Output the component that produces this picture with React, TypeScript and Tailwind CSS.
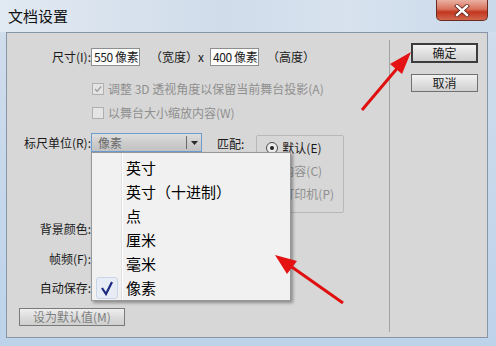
import React from 'react';

const units = ['英寸', '英寸（十进制）', '点', '厘米', '毫米', '像素'];

const Check = ({ color, size = 12 }: { color: string; size?: number }) => (
  <svg width={size} height={size} viewBox="0 0 12 12">
    <path d="M2.5 6 L5 8.8 L9.8 2.8" fill="none" stroke={color} strokeWidth="1.6" />
  </svg>
);

const App = () => {
  return (
    <div className="relative w-[496px] h-[346px] overflow-hidden bg-[linear-gradient(180deg,#dce6f1_0%,#cfdcec_12%,#bdd3ea_100%)] font-['Noto_Sans_CJK_SC','Liberation_Sans',sans-serif] text-[12px] text-[#1a1a1a]">
      {/* title bar */}
      <div className="flex justify-between h-[32px] bg-[linear-gradient(90deg,#e1e9f2_0%,#d0dcea_45%,#d7e2ee_70%,#c9d9ea_100%)]">
        <div className="pl-[8px] pt-[7px] text-[15px] leading-[18px] text-[#111]">文档设置</div>
        <div className="mr-[8px] w-[52px] h-[21px] rounded-b-[5px] border border-t-0 border-[#6a2c22] bg-[linear-gradient(180deg,#eab1a2_0%,#d9735c_45%,#c2371f_60%,#d2664c_100%)] flex items-center justify-center">
          <svg width="16" height="13" viewBox="0 0 16 13">
            <path d="M3 2 L13 11 M13 2 L3 11" stroke="#5a1f16" strokeWidth="4" strokeLinecap="square" />
            <path d="M3 2 L13 11 M13 2 L3 11" stroke="#ffffff" strokeWidth="2.4" strokeLinecap="square" />
          </svg>
        </div>
      </div>

      {/* client area */}
      <div className="ml-[6px] mr-[8px] h-[306px] border border-[#8796a6] bg-[#d7d7d7] flex">
        <div className="w-[382px] flex flex-col">
          <div className="mt-[15px] h-[18px] flex items-center">
            <div className="w-[84px] text-right">尺寸(I):</div>
            <div className="w-[49px] h-[18px] bg-white border border-[#8e8e8e] pl-[2px] leading-[16px] whitespace-nowrap overflow-hidden tracking-[-0.4px]">550 像素</div>
            <div className="ml-[10px]">（宽度）x</div>
            <div className="ml-[6px] w-[49px] h-[18px] bg-white border border-[#8e8e8e] pl-[2px] leading-[16px] whitespace-nowrap overflow-hidden tracking-[-0.4px]">400 像素</div>
            <div className="ml-[8px]">（高度）</div>
          </div>

          <div className="mt-[15px] h-[16px] flex items-center pl-[85px] text-[#8f8f8f]">
            <div className="w-[12px] h-[12px] border border-[#b0b0b0] bg-[#e4e4e4] flex items-center justify-center">
              <Check color="#9a9a9a" size={10} />
            </div>
            <div className="ml-[4px]">调整 3D 透视角度以保留当前舞台投影(A)</div>
          </div>

          <div className="mt-[8px] h-[16px] flex items-center pl-[85px] text-[#8f8f8f]">
            <div className="w-[12px] h-[12px] border border-[#b0b0b0] bg-[#e4e4e4]" />
            <div className="ml-[4px]">以舞台大小缩放内容(W)</div>
          </div>

          <div className="mt-[12px] flex items-start">
            <div className="w-[84px] text-right h-[19px] leading-[19px]">标尺单位(R):</div>
            <div className="w-[111px] h-[19px] border border-[#6e9dcf] bg-[linear-gradient(180deg,#dedede_0%,#cdcdcd_50%,#c2c2c2_100%)] flex">
              <div className="flex-1 pl-[6px] leading-[17px] text-[#6a6a6a]">像素</div>
              <div className="w-[15px] my-[2px] border-l border-[#6a6a6a] flex items-center justify-center">
                <svg width="7" height="4" viewBox="0 0 7 4">
                  <path d="M0 0 L7 0 L3.5 4 Z" fill="#2a2a2a" />
                </svg>
              </div>
            </div>
            <div className="ml-[15px] h-[19px] leading-[21px]">匹配:</div>
            <div className="ml-[12px] mt-[2px] w-[88px] h-[78px] border border-[#b8b8b8] rounded-[2px] flex flex-col">
              <div className="h-[23px] flex items-center pl-[9px]">
                <div className="w-[12px] h-[12px] rounded-full border border-[#4c4c4c] bg-[#ececec] flex items-center justify-center">
                  <div className="w-[4px] h-[4px] rounded-full bg-[#222]" />
                </div>
                <div className="ml-[4px]">默认(E)</div>
              </div>
              <div className="h-[23px] flex items-center pl-[9px] text-[#8f8f8f]">
                <div className="w-[12px] h-[12px] rounded-full border border-[#b0b0b0]" />
                <div className="ml-[4px]">内容(C)</div>
              </div>
              <div className="h-[23px] flex items-center pl-[9px] text-[#8f8f8f]">
                <div className="w-[12px] h-[12px] rounded-full border border-[#b0b0b0]" />
                <div className="ml-[4px]">打印机(P)</div>
              </div>
            </div>
          </div>

          <div className="mt-[8px] h-[16px] leading-[16px] w-[84px] text-right">背景颜色:</div>
          <div className="mt-[14px] h-[16px] leading-[16px] w-[84px] text-right">帧频(F):</div>
          <div className="mt-[13px] h-[16px] leading-[16px] w-[84px] text-right">自动保存:</div>

          <div className="mt-[12px] ml-[12px] w-[106px] h-[18px] border border-[#7a7a7a] bg-[linear-gradient(180deg,#efefef_0%,#dcdcdc_50%,#cfcfcf_100%)] text-center leading-[16px] text-[#7e7e7e]">
            设为默认值(M)
          </div>
        </div>

        <div className="w-px mt-[7px] h-[292px] bg-[#a2a2a2]" />

        <div className="pl-[21px] pt-[10px] flex flex-col">
          <div className="w-[67px] h-[20px] border-2 border-[#3c3c3c] bg-[linear-gradient(180deg,#f2f2f2_0%,#e0e0e0_50%,#cfcfcf_100%)] text-center leading-[16px]">确定</div>
          <div className="mt-[11px] w-[67px] h-[18px] border border-[#707070] bg-[linear-gradient(180deg,#f2f2f2_0%,#e0e0e0_50%,#cfcfcf_100%)] text-center leading-[16px]">取消</div>
        </div>
      </div>

      {/* open dropdown list */}
      <div className="absolute left-[91px] top-[152px] w-[200px] h-[149px] bg-[#f1f1f1] border border-[#979797] shadow-[2px_2px_3px_rgba(0,0,0,0.35)] flex text-[15px] text-black">
        <div className="w-[30px] pt-[3px] border-r border-[#e0e0e0] flex flex-col">
          {units.map((u, i) => (
            <div key={u} className="h-[24px] flex items-center justify-center">
              {i === units.length - 1 && (
                <div className="w-[22px] h-[22px] rounded-[3px] bg-[#e8edf5] border border-[#c9d6e7] flex items-center justify-center">
                  <svg width="14" height="16" viewBox="0 0 14 16">
                    <path d="M2 8 L6 14 L12 2" fill="none" stroke="#1b2a80" strokeWidth="2.2" />
                  </svg>
                </div>
              )}
            </div>
          ))}
        </div>
        <div className="flex-1 pt-[3px] pl-[3px] border-l border-white flex flex-col">
          {units.map(u => (
            <div key={u} className="h-[24px] leading-[24px]">{u}</div>
          ))}
        </div>
      </div>

      {/* red annotation arrows */}
      <svg className="absolute left-0 top-0 pointer-events-none" width="496" height="346" viewBox="0 0 496 346">
        <line x1="362" y1="110" x2="400" y2="65" stroke="#e01010" strokeWidth="3" />
        <polygon points="411,52 402,74 390,64" fill="#e41212" />
        <line x1="343" y1="303" x2="289" y2="265" stroke="#e01010" strokeWidth="3" />
        <polygon points="275,255 297,261 287,274" fill="#e41212" />
      </svg>
    </div>
  );
};

export default App;
